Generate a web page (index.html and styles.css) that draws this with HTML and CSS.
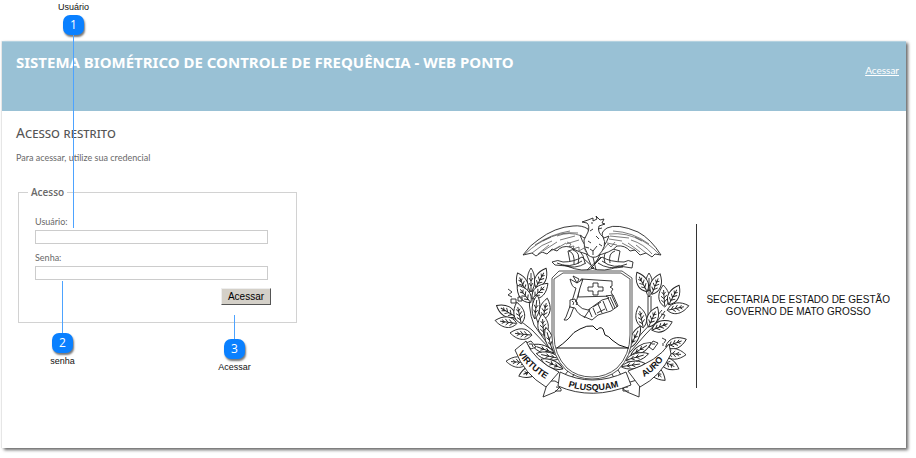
FILE: index.html
```html
<!DOCTYPE html>
<html lang="pt-BR">
<head>
<meta charset="utf-8">
<title>Web Ponto</title>
<link rel="stylesheet" href="styles.css">
</head>
<body>
<div class="page">
  <header class="header">
    <h1 class="title">SISTEMA BIOMÉTRICO DE CONTROLE DE FREQUÊNCIA - WEB PONTO</h1>
    <a class="login-link" href="#acesso">Acessar</a>
  </header>
  <main class="main">
    <section class="login">
      <h2 class="heading">Acesso restrito</h2>
      <p class="intro">Para acessar, utilize sua credencial</p>
      <form id="acesso">
        <fieldset class="box">
          <legend class="legend">Acesso</legend>
          <label class="label" for="usuario">Usuário:</label>
          <input class="field" id="usuario" type="text">
          <label class="label" for="senha">Senha:</label>
          <input class="field" id="senha" type="password">
          <button class="submit" type="button">Acessar</button>
        </fieldset>
      </form>
    </section>
    <section class="brand">
      <svg class="emblem" viewBox="492 210 200 190" width="200" height="190" role="img" aria-label="Brasão de Mato Grosso">
        <defs>
          <g id="leaf">
            <path class="fill" d="M0 11C-8 5-6-4 0-11C6-4 8 5 0 11Z"/>
            <path d="M0 10V-6M0 7l-3-3M0 6l3-3M0 3l-3-3M0 2l3-3M0-1l-2-3M0-2l2-2"/>
          </g>
          <g id="slim">
            <path class="fill" d="M0 12C-5 6-5-5 0-12C5-5 5 6 0 12Z"/>
            <path d="M0 12V-7M0 6l-2-3M0 6l2-3M0 1l-2-3M0 1l2-3"/>
          </g>
          <path id="arc-left" d="M518 352Q526 366 547 379"/>
          <path id="arc-mid" d="M566 385Q592 394 621 385"/>
          <path id="arc-right" d="M644 376Q658 368 667 353"/>
        </defs>
        <g class="ink">
          <path d="M530 280Q527 308 534 324Q545 341 562 360M533 280Q531 307 538 322Q549 339 565 356M513 317Q525 322 532 329L552 350M648 295V318M651 295V316M662 309Q652 322 642 332L622 356M665 310Q655 325 645 334L624 358"/>
          <use href="#slim" transform="translate(531 279)"/>
          <use href="#leaf" transform="translate(541 277) rotate(28)"/>
          <use href="#leaf" transform="translate(522 282) rotate(-24)"/>
          <use href="#leaf" transform="translate(524 293) rotate(-38)"/>
          <use href="#leaf" transform="translate(540 290) rotate(46)"/>
          <use href="#slim" transform="translate(536 306) rotate(6)"/>
          <use href="#leaf" transform="translate(545 308) rotate(12)"/>
          <use href="#leaf" transform="translate(506 310) rotate(-60)"/>
          <use href="#leaf" transform="translate(519 312) rotate(-12)"/>
          <use href="#leaf" transform="translate(506 321) rotate(-82)"/>
          <use href="#leaf" transform="translate(543 324) rotate(-4)"/>
          <use href="#leaf" transform="translate(521 333) rotate(-84)"/>
          <use href="#slim" transform="translate(549 338) rotate(-16)"/>
          <use href="#slim" transform="translate(543 348) rotate(-70)"/>
          <use href="#slim" transform="translate(548 355) rotate(-78)"/>
          <use href="#slim" transform="translate(552 363) rotate(-66)"/>
          <use href="#leaf" transform="translate(517 361) rotate(-86)"/>
          <use href="#leaf" transform="translate(529 371) rotate(-112)"/>
          <use href="#slim" transform="translate(649 284)"/>
          <use href="#leaf" transform="translate(642 281) rotate(-28)"/>
          <use href="#leaf" transform="translate(656 283) rotate(22)"/>
          <use href="#leaf" transform="translate(664 295) rotate(-4)"/>
          <use href="#leaf" transform="translate(674 294) rotate(28)"/>
          <use href="#leaf" transform="translate(678 307) rotate(78)"/>
          <use href="#leaf" transform="translate(641 316) rotate(-12)"/>
          <use href="#leaf" transform="translate(653 316) rotate(24)"/>
          <use href="#leaf" transform="translate(662 325) rotate(68)"/>
          <use href="#slim" transform="translate(635 336) rotate(26)"/>
          <use href="#leaf" transform="translate(676 342) rotate(70)"/>
          <use href="#leaf" transform="translate(675 353) rotate(94)"/>
          <use href="#leaf" transform="translate(669 363) rotate(116)"/>
          <use href="#leaf" transform="translate(657 372) rotate(132)"/>
          <use href="#slim" transform="translate(641 348) rotate(58)"/>
          <use href="#slim" transform="translate(637 356) rotate(74)"/>
          <use href="#slim" transform="translate(633 364) rotate(82)"/>
          <path d="M508 288l4 3-4 3 4 2M511 298h5v4h-5zM518 296h4v4h-4zM661 313l4 1-2 4M662 337l4 2-2 3M663 342v3"/>

          <path class="fill" d="M568 250L571 266H617L620 250Q594 240 568 250Z"/>
          <path class="fill" d="M552 261Q558 258 563 261Q574 261 582 256L594 267Q583 272 567 265L555 264ZM633 261Q628 258 624 261Q610 261 602 256L591 267Q604 272 619 265L632 267Z"/>
          <path d="M557 262Q570 268 582 260M563 264Q575 269 586 262M627 263Q614 269 602 260M623 266Q608 269 598 262M593 256L596 269M601 256L587 269M569 250Q575 252 574 263M573 249Q581 251 578 263M579 249Q584 254 585 262M585 250L591 264M615 250Q608 252 610 262M609 249Q602 252 605 262M602 250L595 263"/>
          <path class="fill" d="M594 255Q577 251 570 246Q562 244 557 250L552 248L547 253L542 251L536 255L532 252L523 254Q530 244 538 239Q555 226 573 225Q582 224 588 228Q591 235 584 237L580 234Q584 246 594 255Z"/>
          <path class="fill" d="M594 255Q611 252 617 245Q625 244 630 250L635 249L640 254L646 252L652 256L655 253L661 254Q651 238 638 231Q617 222 607 227Q599 232 604 237L609 235Q605 247 594 255Z"/>
          <path class="feather" d="M525 253Q538 241 551 236M532 252Q542 243 552 240M538 253L549 244M543 250L557 241M549 251L560 245M554 249L566 242M535 244Q551 233 570 230M543 240Q560 230 578 232M557 235Q569 230 582 235M560 239L575 235M566 243L579 239M659 253Q649 242 635 236M652 253Q644 243 631 239M646 252L636 244M640 251L628 242M635 249L622 242M649 243Q633 231 613 230M642 240Q627 231 609 233M629 237L610 235M622 240L609 238M617 244L607 242"/>
          <path class="feather" d="M567 241l4 2-2 3 5-1-1 3 6-2 0 4 5-3 2 4 5-4 3 4 5-5 4 3 5-6 3 3 4-5"/>
          <path class="fill" d="M588 254Q583 246 584 239L588 231Q590 225 587 222L582 221L588 219L593 217L593 220L597 218L596 215L600 219L604 218L602 222L605 223L599 225Q597 231 603 236Q608 245 598 255Q593 258 588 254Z"/>
          <path d="M591 222h2M588 240l3 2M596 235l3 3M590 248l3 2 4-5M599 243l3 2M590 230l3-2M598 228l4-1M585 246l4 1M593 254v-4"/>

          <path class="shield" d="M561 270H622L632 277V335Q632 355 618 369Q607 378 592 378Q577 378 566 369Q552 355 552 335V277L559 270Z"/>
          <path class="shield" d="M563 272H621L630 278V334Q630 354 617 367Q606 376 592 376Q577 376 567 367Q554 354 554 334V278Z"/>
          <path class="mountain" d="M556 347H629M557 347Q563 343 568 338Q574 330 580 328Q587 324 593 325L597 329Q600 325 603 328L605 334Q609 335 612 339Q618 345 628 347"/>
          <path class="fill" d="M581 278L612 280V285L610 286L613 288L611 291L613 295L578 296Z"/>
          <path d="M593 282H598V286H603V290H598V294H593V290H588V286H593Z"/>
          <path class="fill" d="M577 282L579 278L573 275L577 282L570 278Q572 287 576 287L573 297L566 316L564 319L567 319L570 316L577 298L580 287L583 278Z"/>
          <path class="fill" d="M570 299L575 298L577 303Q582 309 588 309L602 299L609 297L606 295L613 294L618 305L611 310L598 314L592 319L585 316Q578 314 575 307L570 306Z"/>
          <path d="M572 300q3 1 1 4M575 300q4 1 1 4M589 309L592 316M590 308L584 317M593 307L596 314M598 303L602 312M603 300L607 310M608 297L613 308M610 296L615 307M612 295L617 306M593 306l8-5M597 312l8-4"/>

          <path d="M568 370l-4 5M574 373l-3 6M612 373l3 6M618 369l3 5"/>
          <path class="fill" d="M548 380L543 396L555 391L562 384L555 380ZM640 378L639 396L627 391L622 387L627 382ZM556 386q6 0 5 4l-6 0M628 386q-6 0-5 4l6 0M526 342l5-2 5 6-5 2zM529 343l3 0 1 3M658 342l-5-2-4 6 4 3zM655 343l-3 0"/>
          <path class="fill" d="M515 349L526 340Q533 359 559 371L546 386Q524 373 515 349Z"/>
          <path class="fill" d="M669 343Q658 360 628 370L640 386Q661 375 671 353Z"/>
          <path class="fill" d="M560 371Q592 387 626 371L631 384Q592 400 558 385Z"/>
        </g>
        <g class="motto">
          <text><textPath href="#arc-left">VIRTUTE</textPath></text>
          <text><textPath href="#arc-mid" startOffset="50%" text-anchor="middle">PLUSQUAM</textPath></text>
          <text><textPath href="#arc-right">AURO</textPath></text>
        </g>
      </svg>
      <p class="office">SECRETARIA DE ESTADO DE GESTÃO<br>GOVERNO DE MATO GROSSO</p>
    </section>
  </main>
</div>
<div class="note note-user"><span>Usuário</span><b class="badge">1</b><i class="line"></i></div>
<div class="note note-pass"><i class="line"></i><b class="badge">2</b><span>senha</span></div>
<div class="note note-enter"><i class="line"></i><b class="badge">3</b><span>Acessar</span></div>
</body>
</html>
```
FILE: styles.css
```css
* { box-sizing: border-box; }

body {
  margin: 0;
  padding: 41px 10px 10px 2px;
  min-height: 100vh;
  display: flex;
  position: relative;
  background: #fff;
  color: #696969;
  font: 9px/12px "Lato", sans-serif;
}

h1, h2, p { margin: 0; }

.page {
  flex: 1;
  display: flex;
  flex-direction: column;
  background: #fff;
  box-shadow: 2px 2px 3px #666, -1px 0 1px #eee;
}

.header {
  display: flex;
  justify-content: space-between;
  align-items: flex-start;
  height: 70px;
  padding: 10px 7px 0 14px;
  background: #99c1d5;
  border-top: 1px solid #b5d2e0;
}

.title {
  color: #fff;
  font: 700 15px/20px "Noto Sans", sans-serif;
}

.login-link {
  margin-top: 12px;
  color: #fff;
  font-size: 10px;
  line-height: 12px;
}

.main {
  flex: 1;
  display: flex;
  justify-content: space-between;
  padding: 14px 16px 0 14px;
}

.login { width: 281px; }

.heading {
  color: #555;
  font: 400 14px/16px "Noto Sans", sans-serif;
  font-variant: small-caps;
}

.intro {
  margin-top: 11px;
  font-size: 9px;
}

.box {
  margin: 22px 0 0 2px;
  padding: 18px 28px 17px 16px;
  border: 1px solid #d2d2d2;
  display: flex;
  flex-direction: column;
}

.legend {
  margin-left: -7px;
  padding: 0 3px;
  font: 600 10px/12px "Open Sans", sans-serif;
}

.label {
  margin-bottom: 2px;
  font-size: 9px;
}

.field {
  width: 100%;
  height: 14px;
  margin: 0 0 8px;
  padding: 0 2px;
  border: 1px solid #ccc;
  font-size: 9px;
}

.submit {
  align-self: flex-end;
  width: 50px;
  height: 17px;
  margin-right: -3px;
  padding: 0;
  border: 1px solid;
  border-color: #eee #555 #555 #eee;
  background: #d4d0c8;
  color: #000;
  font: 10px/12px "Liberation Sans", sans-serif;
}

.brand {
  display: flex;
  align-items: center;
  align-self: flex-start;
  margin-top: 86px;
}

.emblem { display: block; }

.ink { fill: none; stroke: #222; stroke-width: 0.9; stroke-linejoin: round; }
.fill { fill: #fff; }
.feather { stroke: #444; stroke-width: 0.7; }
.shield { fill: #fff; stroke: #555; stroke-width: 1; }
.mountain { stroke: #111; stroke-width: 1; }
.motto { fill: #111; font: bold 9px "Liberation Sans", sans-serif; }

.office {
  display: flex;
  align-items: center;
  min-height: 164px;
  margin-left: 4px;
  padding-left: 9px;
  border-left: 1px solid #333;
  color: #111;
  font: 10px/12px "Liberation Sans", sans-serif;
  text-align: center;
}

.note {
  position: absolute;
  display: flex;
  flex-direction: column;
  align-items: center;
  width: 51px;
  color: #111;
  font: 9px/12px "Liberation Sans", sans-serif;
}

.note-user { left: 48px; top: 1px; }
.note-pass { left: 37px; top: 281px; }
.note-enter { left: 209px; top: 315px; }

.badge {
  width: 21px;
  height: 20px;
  border-radius: 7px;
  background: #0a80ff;
  box-shadow: 1px 2px 2px #777;
  color: #fff;
  font: 12px/20px "Open Sans", sans-serif;
  text-align: center;
}

.line { width: 1px; background: #4da3ff; }
.note-user .badge { margin-top: 2px; }
.note-user .line { height: 193px; }
.note-pass .line { height: 52px; }
.note-enter .line { height: 24px; }
.note-pass span, .note-enter span { margin-top: 2px; }
```
